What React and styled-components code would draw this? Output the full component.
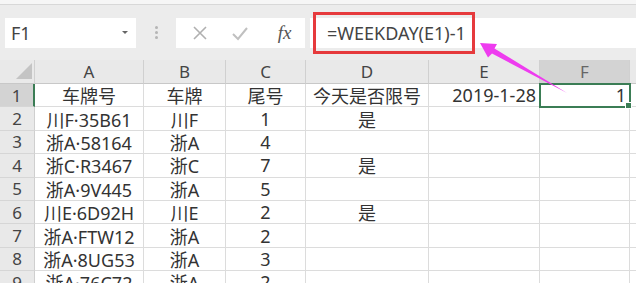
import React from 'react';
import styled, { createGlobalStyle } from 'styled-components';

const GlobalStyle = createGlobalStyle`
  body {
    margin: 0;
    background: #fff;
    font-family: "Noto Sans", "Noto Sans CJK SC", sans-serif;
  }
`;

const Page = styled.div`
  position: relative;
  width: 636px;
  height: 283px;
  overflow: hidden;
  background: #fff;
`;

const TopStrip = styled.div`
  height: 4px;
  background: #f6f6f6;
  border-bottom: 1px solid #d8d8d8;
`;

const FormulaBar = styled.div`
  height: 55px;
  background: #ececec;
  display: flex;
  align-items: center;
  padding-left: 5px;
`;

const NameBox = styled.div`
  width: 131px;
  height: 30px;
  background: #fff;
  display: flex;
  align-items: center;
  justify-content: space-between;
  padding: 0 8px 0 6px;
  box-sizing: border-box;
  font-size: 18px;
  color: #444;
`;

const Caret = styled.span`
  width: 0;
  height: 0;
  border-left: 3px solid transparent;
  border-right: 3px solid transparent;
  border-top: 3px solid #666;
`;

const Dots = styled.div`
  width: 40px;
  display: flex;
  flex-direction: column;
  align-items: center;
  gap: 2px;
  & > span {
    width: 3px;
    height: 3px;
    border-radius: 50%;
    background: #b5b5b5;
  }
`;

const IconBox = styled.div`
  width: 129px;
  height: 30px;
  background: #fff;
  display: flex;
  align-items: center;
  justify-content: space-around;
  padding: 0 2px 0 4px;
  box-sizing: border-box;
`;

const Fx = styled.span`
  font-family: "Liberation Serif", serif;
  font-style: italic;
  font-size: 19px;
  color: #555;
  margin-left: 6px;
`;

const FormulaInput = styled.div`
  flex: 1;
  height: 30px;
  margin-left: 5px;
  background: #fff;
  display: flex;
  align-items: center;
  padding-left: 17px;
  font-size: 18px;
  color: #444;
`;

const Sheet = styled.div`
  display: grid;
  grid-template-columns: 35px 109px 82px 80px 123px 111px 90px 1fr;
  grid-template-rows: 24px;
  grid-auto-rows: 23.4px;
`;

const Cell = styled.div`
  position: relative;
  box-sizing: border-box;
  border-right: 1px solid #dcdcdc;
  border-bottom: 1px solid #dcdcdc;
  display: flex;
  align-items: center;
  justify-content: ${p => p.$align || 'center'};
  padding: 0 3px;
  font-size: 18px;
  color: #333;
  white-space: nowrap;
  ${p => p.$selected && `
    outline: 2px solid #3b7d55;
    outline-offset: -1px;
    z-index: 2;
    &::after {
      content: '';
      position: absolute;
      right: -3px;
      bottom: -3px;
      width: 5px;
      height: 5px;
      background: #3b7d55;
      border: 1px solid #fff;
    }
  `}
`;

const ColHead = styled.div`
  box-sizing: border-box;
  background: ${p => (p.$active ? '#d3d3d3' : '#e9e9e9')};
  border-right: 1px solid #d0d0d0;
  border-bottom: 1px solid #c8c8c8;
  display: flex;
  align-items: center;
  justify-content: center;
  font-size: 17px;
  color: ${p => (p.$active ? '#666' : '#444')};
`;

const Corner = styled(ColHead)`
  position: relative;
  &::after {
    content: '';
    position: absolute;
    right: 2px;
    bottom: 4px;
    width: 0;
    height: 0;
    border-left: 16px solid transparent;
    border-bottom: 16px solid #c4c4c4;
  }
`;

const RowHead = styled.div`
  box-sizing: border-box;
  background: ${p => (p.$active ? '#d3d3d3' : '#e9e9e9')};
  border-right: ${p => (p.$active ? '2px solid #3b7d55' : '1px solid #cfcfcf')};
  border-bottom: 1px solid #d6d6d6;
  display: flex;
  align-items: center;
  justify-content: center;
  font-size: 17px;
  color: #444;
`;

const RedFrame = styled.div`
  position: absolute;
  left: 313px;
  top: 12px;
  width: 162px;
  height: 42px;
  box-sizing: border-box;
  border: 3px solid #e63a3d;
`;

const ArrowLayer = styled.svg`
  position: absolute;
  left: 0;
  top: 0;
  pointer-events: none;
  z-index: 5;
`;

const cols = ['A', 'B', 'C', 'D', 'E', 'F', 'G'];

const rows = [
  ['车牌号', '车牌', '尾号', '今天是否限号', '2019-1-28', '1'],
  ['川F·35B61', '川F', '1', '是', '', ''],
  ['浙A·58164', '浙A', '4', '', '', ''],
  ['浙C·R3467', '浙C', '7', '是', '', ''],
  ['浙A·9V445', '浙A', '5', '', '', ''],
  ['川E·6D92H', '川E', '2', '是', '', ''],
  ['浙A·FTW12', '浙A', '2', '', '', ''],
  ['浙A·8UG53', '浙A', '3', '', '', ''],
  ['浙A·76C72', '浙A', '2', '', '', ''],
];

const alignFor = c => (c === 4 || c === 5 ? 'flex-end' : 'center');

export default function App() {
  return (
    <Page>
      <GlobalStyle />
      <TopStrip />
      <FormulaBar>
        <NameBox>
          F1
          <Caret />
        </NameBox>
        <Dots>
          <span />
          <span />
          <span />
        </Dots>
        <IconBox>
          <svg width="16" height="16" viewBox="0 0 16 16">
            <path d="M2 2 L14 14 M14 2 L2 14" stroke="#b0b0b0" strokeWidth="1.6" fill="none" />
          </svg>
          <svg width="18" height="16" viewBox="0 0 18 16">
            <path d="M2 9 L7 14 L16 3" stroke="#c0c0c0" strokeWidth="2" fill="none" />
          </svg>
          <Fx>fx</Fx>
        </IconBox>
        <FormulaInput>=WEEKDAY(E1)-1</FormulaInput>
      </FormulaBar>
      <Sheet>
        <Corner />
        {cols.map(c => (
          <ColHead key={c} $active={c === 'F'}>
            {c === 'G' ? '' : c}
          </ColHead>
        ))}
        {rows.map((row, r) => (
          <React.Fragment key={r}>
            <RowHead $active={r === 0}>{r + 1}</RowHead>
            {row.map((v, c) => (
              <Cell key={c} $align={alignFor(c)} $selected={r === 0 && c === 5}>
                {v}
              </Cell>
            ))}
            <Cell />
          </React.Fragment>
        ))}
      </Sheet>
      <RedFrame />
      <ArrowLayer width="636" height="283">
        <polygon
          points="480,43 497,44 494.5,48.5 567,93 492,53.5 488,57.5"
          fill="#ee3cef"
        />
      </ArrowLayer>
    </Page>
  );
}
